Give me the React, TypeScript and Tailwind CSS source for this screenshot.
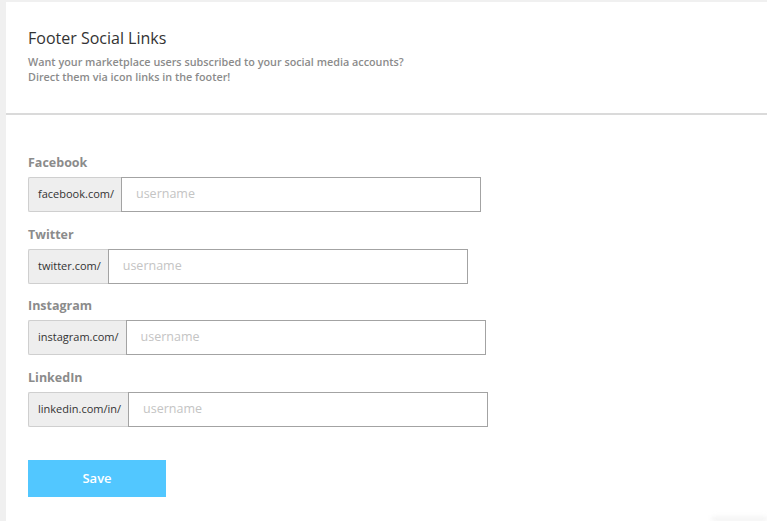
import { useState } from "react"

type Network = {
    label: string
    prefix: string
}

const networks: Network[] = [
    { label: "Facebook", prefix: "facebook.com/" },
    { label: "Twitter", prefix: "twitter.com/" },
    { label: "Instagram", prefix: "instagram.com/" },
    { label: "LinkedIn", prefix: "linkedin.com/in/" },
]

const SocialField = ({ network }: { network: Network }) => {
    const [value, setValue] = useState("")

    return (
        <div className="mb-[13.5px]">
            <label className="block text-[12.5px] font-bold text-[#8b8b8b] leading-[18px] mb-[5px]">
                {network.label}
            </label>
            <div className="flex h-[35px]">
                <span className="flex items-center pl-[9px] pr-[7px] bg-[#eeeeee] border border-r-0 border-[#cfcfcf] rounded-l-[2px] text-[11px] text-[#333]">
                    {network.prefix}
                </span>
                <input
                    type="text"
                    value={value}
                    placeholder="username"
                    onChange={(e) => setValue(e.target.value)}
                    className="w-[360px] border border-[#a3a3a3] px-[14px] text-[12.5px] text-[#333] placeholder:text-[#c4c4c4] outline-none"
                />
            </div>
        </div>
    )
}

export default function App() {
    return (
        <div
            className="relative min-h-[521px] bg-[#f0f0f0] pl-[6px] pt-[2px] overflow-hidden"
            style={{ fontFamily: "'Open Sans', 'Liberation Sans', sans-serif" }}
        >
            <div className="bg-white min-h-[519px]">
                <div className="px-[22px] pt-[24px] pb-[29px] border-b-2 border-[#dadada]">
                    <h1 className="text-[16px] text-[#333] leading-[24px] mb-[4px]">Footer Social Links</h1>
                    <p className="text-[10.8px] font-semibold text-[#8b8b8b] leading-[15px]">
                        Want your marketplace users subscribed to your social media accounts?
                        <br />
                        Direct them via icon links in the footer!
                    </p>
                </div>
                <div className="px-[22px] pt-[39px]">
                    {networks.map((n) => (
                        <SocialField key={n.label} network={n} />
                    ))}
                    <button className="mt-[20px] w-[138px] h-[37px] bg-[#52c7ff] text-white text-[13px] font-semibold">
                        Save
                    </button>
                </div>
            </div>
            <div className="absolute right-0 bottom-0 w-[55px] h-[6px] bg-gradient-to-b from-white to-[#ececec] blur-[2px]" />
        </div>
    )
}
